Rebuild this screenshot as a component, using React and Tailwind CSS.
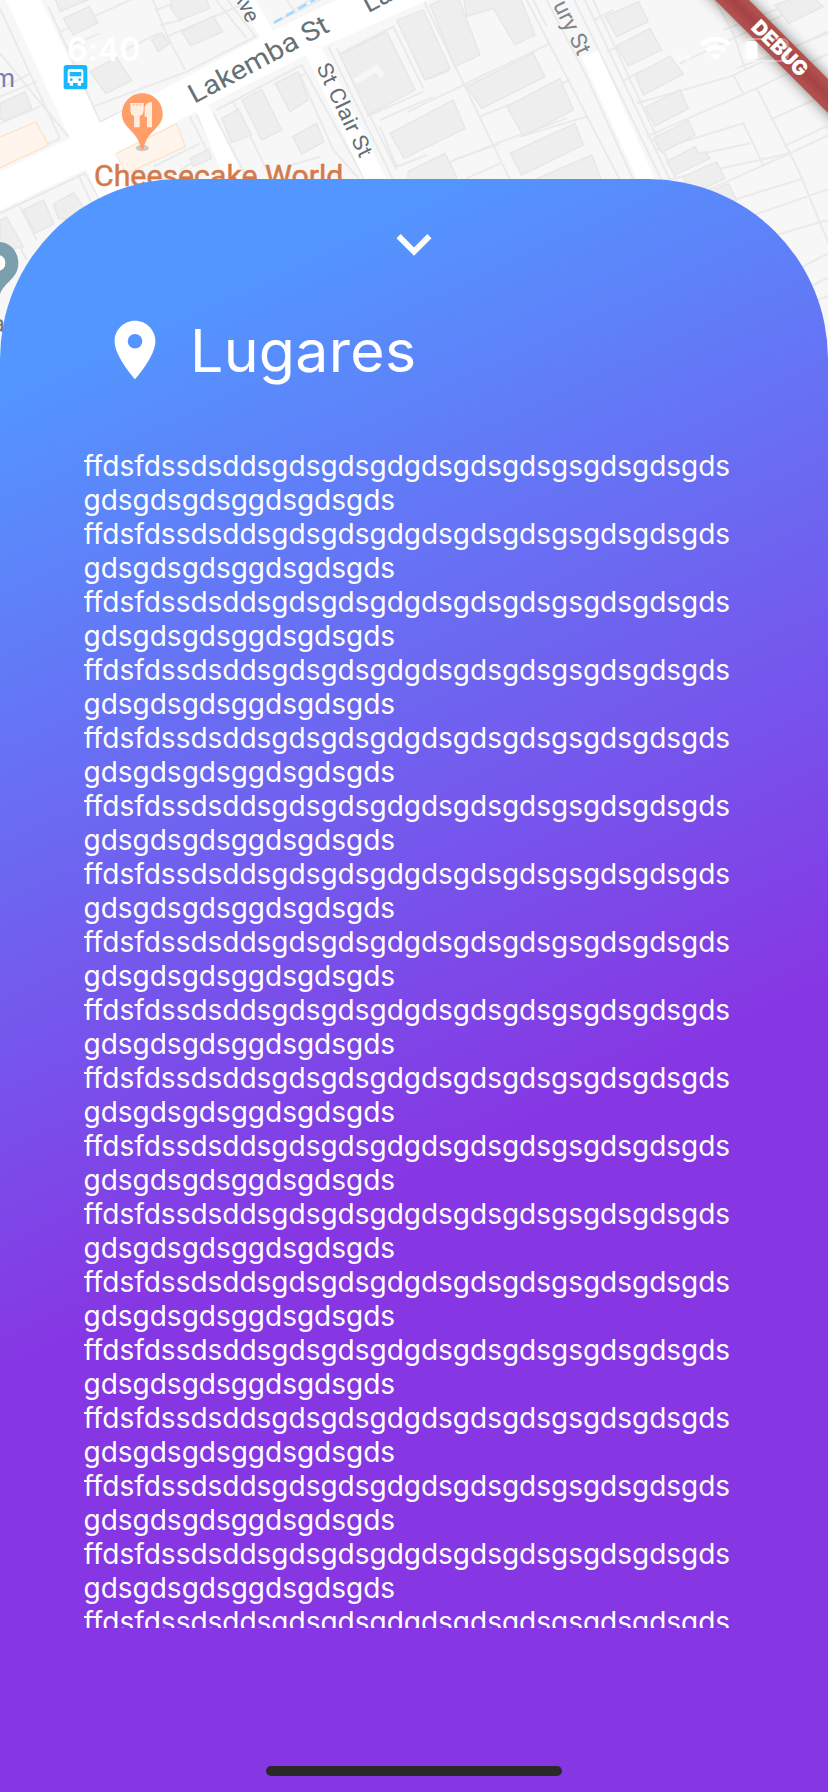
import React from "react";

const FIRST = "ffdsfdssdsddsgdsgdsgdgdsgdsgdsgsgdsgdsgds";
const SECOND = "gdsgdsgdsggdsgdsgds";

function MapView() {
  return (
    <svg className="absolute left-0 top-0" width="828" height="420" viewBox="0 0 2484 1260">
      <rect width="2484" height="1260" fill="#f7f7f7" />
      {/* parcel boundaries */}
      <g fill="none" stroke="#eaeaea" strokeWidth="6">
        <path d="M0 160L205 410M-5 15L180 415L0 500M0 265L90 222M0 290L110 245M0 370L120 320M145 20L285 330L300 368M180 95L480 -40M200 140L300 100M300 365L560 240L780 125M280 320L560 215L770 108M365 155L475 100M455 -10L500 105L555 210M465 30L510 15M480 75L545 60M640 -10L740 115M675 -10L765 108M500 110L760 0" />
        <path d="M0 640L60 612L255 520L300 600M15 650L80 780M235 525L275 610M60 620L110 720M605 350L700 540M640 340L745 540M650 330L905 195L1095 540M700 305L800 510M905 235L1000 450L1080 540M830 260L920 220M860 500L960 470M460 500L600 430M590 345L640 440M570 350L625 460L540 510" />
        <path d="M820 70L1000 -20M985 140L1180 540M1010 145L1190 510M985 130L1250 0M1020 160L1180 80L1270 265M1100 350L1270 275M1140 360L1300 290M1140 380L1190 500L1280 465M1215 540L1490 430L1700 355M860 0L880 30L930 0" />
        <path d="M1224 335L1650 130M1270 0L1530 540M1290 235L1350 210M1400 250L1470 215M1440 350L1710 240M1560 410L1760 350M1360 480L1500 430M1400 535L1500 490M1575 -10L1860 540M1600 0L1640 80M1640 0L1760 230L1900 540M1750 -10L2010 540M1775 -10L2030 540M1718 -10L1985 540M1780 62L1840 30M1820 155L1880 130M1865 245L1930 210M1910 310L2190 230L2600 40M2040 190L2370 35M1940 410L2270 265L2550 130M1970 450L2230 370L2290 495M2020 480L2250 430M2000 540L2370 460L2550 375M2140 -10L2200 100L2235 205M2200 225L2230 280M2270 265L2395 510L2490 740M2310 360L2550 250M2350 440L2520 360M2080 590L2370 460M2200 600L2410 535M2190 670L2420 590L2540 550M2310 710L2484 660M2390 810L2484 760M2410 870L2550 800M2430 910L2550 860M2170 90L2350 20M2210 205L2484 100" />
      </g>
      {/* buildings */}
      <g fill="#eeeeee" stroke="#e6e6e6" strokeWidth="4">
        <path d="M190 55L268 20L295 68L220 105ZM165 -5L180 35L265 0ZM270 215L350 172L395 242L318 280ZM455 120L485 98L508 130L475 155ZM512 25L540 60L630 25L615 -10L515 -10ZM545 95L640 48L668 95L572 138ZM0 310L75 275L95 325L15 362L0 355ZM70 630L130 600L162 672L105 700ZM160 612L220 578L255 625L215 660L175 655ZM0 660L20 652L70 740L0 755ZM665 355L715 328L755 405L695 428ZM725 300L785 268L845 390L785 420ZM825 250L895 215L925 300L870 335ZM878 410L950 370L972 425L905 462ZM570 475L625 448L635 475L580 500ZM1020 165L1160 95L1245 270L1105 345Z" />
        <path d="M1190 60L1270 30L1350 205L1275 240ZM1290 15L1370 -20L1440 165L1365 200ZM1400 50L1390 -10L1560 -10L1605 105L1545 135L1480 25ZM1400 260L1600 160L1635 230L1445 325ZM1520 320L1680 235L1720 330L1570 408ZM1530 460L1725 370L1750 435L1565 525ZM1170 400L1360 300L1395 385L1212 475ZM1224 515L1335 460L1370 530L1365 560L1224 560ZM1590 545L1775 465L1805 540ZM1815 50L1915 5L1945 65L1850 110ZM1848 138L1950 85L1985 150L1885 198ZM1905 225L2010 168L2050 222L1930 285ZM1935 322L2040 270L2065 325L1965 378ZM1960 415L2065 362L2085 405L1985 458ZM2000 485L2085 440L2095 460L2115 455L2130 475L2025 525ZM2050 530L2150 485L2175 535L2070 585ZM2110 585L2185 550L2210 600L2140 640ZM2325 15L2425 -20L2470 20L2365 70Z" />
      </g>
      <path d="M1065 245L1130 205L1148 230" fill="none" stroke="#f7f7f7" strokeWidth="18" />
      <g fill="#fff5ec" stroke="#fde3c8" strokeWidth="4">
        <path d="M-10 415L108 366L145 435L-10 508ZM345 462L530 372L556 440L380 520Z" />
      </g>
      {/* streets */}
      <g fill="#fff">
        <path d="M0 515L210 415L18 0H122L300 370L780 112L718 0H768L818 92L1010 0H1285L965 142L1160 540H1095L918 165L625 315L735 540H675L590 335L556 352L345 460L400 570L300 600L258 508L0 630Z" />
        <path d="M1744 170L1794 150L1966 540H1912Z" />
      </g>
      <path d="M822 68L945 -2" stroke="#a5d8ff" strokeWidth="8" strokeDasharray="28 14" />
      {/* street names */}
      <g fill="#667075" stroke="#fff" strokeWidth="4" paintOrder="stroke" fontFamily="Roboto, sans-serif">
        <text transform="translate(583 312) rotate(-28.2)" fontSize="80" textLength="465" lengthAdjust="spacingAndGlyphs">Lakemba St</text>
        <text transform="translate(1105 40) rotate(-28)" fontSize="80">La</text>
        <text transform="translate(948 202) rotate(64.3)" fontSize="65" textLength="305" lengthAdjust="spacingAndGlyphs">St Clair St</text>
        <text transform="translate(742 72) rotate(64)" fontSize="64" textAnchor="end">Ave</text>
        <text transform="translate(1734 170) rotate(64)" fontSize="68" textAnchor="end" fill="#7f8588" stroke="#f7f7f7">ury St</text>
      </g>
      <text x="-22" y="260" fontFamily="Roboto, sans-serif" fontSize="76" fill="#7780b5">m</text>
      <text x="282" y="558" fontFamily="Roboto, sans-serif" fontSize="88" fill="#d5794b" stroke="#d5794b" strokeWidth="1.5" textLength="748" lengthAdjust="spacingAndGlyphs">Cheesecake World</text>
      {/* bus stop */}
      <rect x="191" y="195" width="71" height="73" rx="8" fill="#18b8ff" />
      <path d="M210 207H243Q250 207 250 216V249H243V257H233V249H219V257H209V249H203V216Q203 207 210 207Z" fill="#fff" />
      <path d="M209 216H244V229H209Z" fill="#18b8ff" />
      <circle cx="214" cy="239" r="4" fill="#18b8ff" /><circle cx="239" cy="239" r="4" fill="#18b8ff" />
      {/* restaurant */}
      <ellipse cx="427" cy="444" rx="20" ry="10" fill="#cfcac5" />
      <path d="M427 280C393 280 366 307 366 342C366 388 415 390 423 448H431C439 390 488 388 488 342C488 307 461 280 427 280Z" fill="#ff9e67" />
      <path d="M391 309H431V331Q431 345 419 348V382H402V348Q391 345 391 331ZM456 306V382H441V350H434V324Q436 308 456 306Z" fill="#ffeedd" />
      <path d="M398 314H424" stroke="#ffc9a6" strokeWidth="6" strokeDasharray="6 4" />
      {/* neighbouring place marker */}
      <path d="M-5 726C30 726 55 754 55 790C55 835 15 845 0 882V812A22 24 0 0 0 0 766L-30 766V726Z" fill="#7b9fad" />
      <circle cx="-4" cy="789" r="20" fill="#fff" />
      <text x="-24" y="995" fontFamily="Roboto, sans-serif" fontSize="70" fill="#6f777b">a</text>
    </svg>
  );
}

function StatusBar() {
  return (
    <div className="absolute inset-x-0 top-0 h-[88px] text-white">
      <span className="absolute left-[67px] top-[30px] text-[32px] font-semibold leading-[40px] tracking-[0.2px]">6:40</span>
      <svg className="absolute left-[676px] top-[30px]" width="120" height="40" viewBox="0 0 120 40" fill="none">
        <g fill="#fff" fillOpacity="0.5"><circle cx="3" cy="28" r="3" /><circle cx="11" cy="28" r="3" /></g>
        <g stroke="#fff" strokeWidth="4.500">
          <path d="M25.500 14.500Q39.500 3.500 54 14.500" />
          <path d="M30.500 20.800Q39.500 13.500 49 20.800" />
        </g>
        <path d="M34.500 25.500Q39.500 21.500 44.500 25.500L39.500 31Z" fill="#fff" />
        <rect x="68" y="9" width="44" height="22" rx="6" stroke="#fff" strokeOpacity="0.35" strokeWidth="2" />
        <rect x="69.500" y="11" width="12" height="18" rx="4" fill="#fff" />
      </svg>
    </div>
  );
}

function DebugBanner() {
  return (
    <svg className="absolute right-0 top-0" width="160" height="160" viewBox="0 0 160 160">
      <defs>
        <filter id="soft" x="-20%" y="-100%" width="140%" height="300%"><feGaussianBlur stdDeviation="7" /></filter>
        <linearGradient id="band" x1="0" y1="0" x2="0" y2="1">
          <stop offset="0" stopColor="#b55151" /><stop offset="0.5" stopColor="#a54444" /><stop offset="1" stopColor="#b55151" />
        </linearGradient>
      </defs>
      <g transform="translate(112 48) rotate(45)">
        <rect x="-110" y="-12" width="220" height="24" fill="#000" fillOpacity="0.5" filter="url(#soft)" />
        <rect x="-110" y="-12" width="220" height="24" fill="url(#band)" />
        <text y="7.400" textAnchor="middle" fill="#fff" fontFamily="Inter, sans-serif" fontWeight="900" fontSize="20.400" textLength="70">DEBUG</text>
      </g>
    </svg>
  );
}

export default function App() {
  return (
    <div className="relative flex h-[1792px] w-[828px] flex-col overflow-hidden bg-[#f7f7f7] pt-[179px] font-['Inter',sans-serif]">
      <MapView />
      <main className="relative flex flex-1 flex-col items-center rounded-t-[180px] bg-[linear-gradient(154.8deg,#5396ff_188px,#8637e3_1078px)] text-white">
        <svg className="mt-[30px] size-[70px] shrink-0" viewBox="0 0 24 24" fill="currentColor">
          <path d="M7.410 8.590L12 13.170l4.590-4.580L18 10l-6 6-6-6z" />
        </svg>
        <header className="mt-[36px] flex h-[72px] w-full items-center pl-[100px]">
          <svg className="-mt-[2px] size-[70px] shrink-0" viewBox="0 0 24 24" fill="currentColor">
            <path d="M12 2C8.130 2 5 5.130 5 9c0 5.250 7 13 7 13s7-7.750 7-13c0-3.870-3.130-7-7-7zm0 9.500a2.500 2.500 0 0 1 0-5 2.500 2.500 0 0 1 0 5z" />
          </svg>
          <h1 className="ml-[20px] text-[59px] leading-[72px] tracking-[0.3px]">Lugares</h1>
        </header>
        <div className="mt-[62px] h-[1179px] w-[661px] shrink-0 overflow-hidden text-[28px] leading-[34px] tracking-[-0.01px] [font-variant-ligatures:none]">
          {Array.from({ length: 18 }, (_, i) => (
            <p key={i}>
              <span className="block whitespace-nowrap">{FIRST}</span>
              <span className="block whitespace-nowrap">{SECOND}</span>
            </p>
          ))}
        </div>
        <div className="absolute bottom-[16px] h-[10px] w-[296px] rounded-full bg-[#292929]" />
      </main>
      <DebugBanner />
      <StatusBar />
    </div>
  );
}
